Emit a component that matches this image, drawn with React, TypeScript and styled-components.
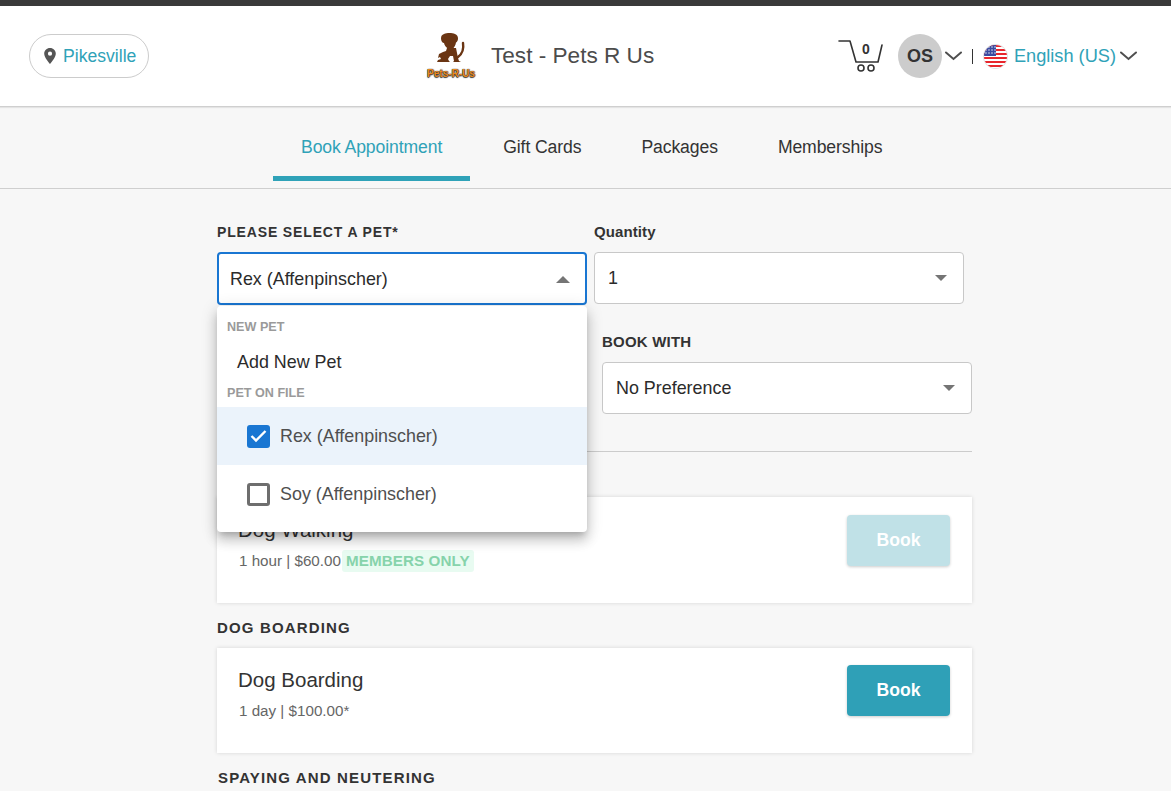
import { createGlobalStyle, styled } from 'styled-components';

const teal = '#2fa2b8';
const ink = '#333333';

const GlobalStyle = createGlobalStyle`
  html, body {
    margin: 0;
    height: 100%;
    overflow: hidden;
    background: #f7f7f7;
    font-family: "Liberation Sans", Arial, sans-serif;
    color: ${ink};
  }
`;

const TopStrip = styled.div`
  height: 6px;
  background: #3a3a3a;
`;

const Header = styled.header`
  display: grid;
  grid-template-columns: 398px 1fr auto;
  align-items: center;
  height: 100px;
  padding: 0 34px 0 29px;
  background: #fff;
  border-bottom: 1px solid #cfcfcf;
  box-shadow: 0 1px 1px #e4e4e4;
`;

const LocationPill = styled.button`
  display: flex;
  align-items: center;
  gap: 7px;
  width: 120px;
  height: 44px;
  padding: 0 0 0 14px;
  background: #fff;
  border: 1px solid #cccccc;
  border-radius: 22px;
  color: ${teal};
  font: 17.6px "Liberation Sans", Arial, sans-serif;
`;

const Brand = styled.div`
  display: flex;
  align-items: center;
  gap: 16px;
`;

const Logo = styled.div`
  display: flex;
  flex-direction: column;
  align-items: center;
  width: 48px;
  height: 47px;
`;

const LogoWord = styled.span`
  margin-top: 5px;
  color: #ea8a1e;
  font-size: 10px;
  font-weight: 700;
  line-height: 12px;
  white-space: nowrap;
  text-shadow: 0 0 1px #222, 0 1px 1px #333, 1px 0 1px #555;
`;

const BrandName = styled.span`
  font-size: 22.6px;
  color: #4c4c4c;
`;

const UserArea = styled.div`
  display: flex;
  align-items: center;
`;

const CartButton = styled.div`
  position: relative;
  width: 46px;
  height: 36px;
  margin-right: 14px;
`;

const CartCount = styled.span`
  position: absolute;
  top: 3px;
  left: 24px;
  font-size: 14px;
  font-weight: 700;
  color: ${ink};
`;

const Avatar = styled.div`
  display: flex;
  align-items: center;
  justify-content: center;
  width: 44px;
  height: 44px;
  margin-right: 3px;
  border-radius: 50%;
  background: #cccccc;
  font-size: 18px;
  font-weight: 700;
  color: ${ink};
`;

const Divider = styled.span`
  width: 1px;
  height: 15px;
  margin: 0 10px;
  background: #333;
`;

const Language = styled.span`
  margin: 0 4px 0 6px;
  font-size: 18.2px;
  color: ${teal};
`;

const Chevron = styled.svg`
  display: block;
  width: 17px;
  height: 10px;
  flex: none;
`;

const TabBar = styled.nav`
  display: flex;
  height: 81px;
  padding-left: 273px;
  border-bottom: 1px solid #cfcfcf;
`;

const Tab = styled.a<{ $active?: boolean }>`
  box-sizing: border-box;
  display: flex;
  align-items: center;
  height: 74px;
  padding: ${p => (p.$active ? '12px 28px 0' : '12px 30px 0')};
  margin-right: ${p => (p.$active ? '3px' : '0')};
  border-bottom: 5px solid ${p => (p.$active ? teal : 'transparent')};
  font-size: 17.6px;
  letter-spacing: -0.1px;
  color: ${p => (p.$active ? teal : ink)};
`;

const Content = styled.main`
  width: 755px;
  margin-left: 217px;
  padding-top: 34px;
`;

const TopRow = styled.div`
  display: grid;
  grid-template-columns: 370px 370px;
  column-gap: 7px;
`;

const SecondRow = styled.div`
  display: flex;
  justify-content: flex-end;
  margin-top: 28px;
`;

const Field = styled.div`
  position: relative;
  width: 370px;
`;

const FieldLabel = styled.label<{ $spacing?: string; $size?: string }>`
  display: block;
  height: 17px;
  margin-bottom: 12px;
  font-size: ${p => p.$size ?? '14px'};
  font-weight: 700;
  line-height: 18px;
  letter-spacing: ${p => p.$spacing ?? '0'};
  color: ${ink};
  white-space: nowrap;
`;

const SelectBox = styled.div<{ $open?: boolean }>`
  box-sizing: border-box;
  display: flex;
  align-items: center;
  justify-content: space-between;
  height: ${p => (p.$open ? '53px' : '52px')};
  padding: ${p => (p.$open ? '2px 15px 0 11px' : '0 16px 0 13px')};
  background: #fff;
  border: ${p => (p.$open ? '2px solid #1976d2' : '1px solid #c8c8c8')};
  border-radius: 4px;
  font-size: 17.9px;
  color: #2b2b2b;
`;

const Caret = styled.span<{ $up?: boolean }>`
  width: 0;
  height: 0;
  border-left: ${p => (p.$up ? '7px' : '6px')} solid transparent;
  border-right: ${p => (p.$up ? '7px' : '6px')} solid transparent;
  border-top: ${p => (p.$up ? '0' : '6px solid #757575')};
  border-bottom: ${p => (p.$up ? '7px solid #757575' : '0')};
`;

const Menu = styled.div`
  position: absolute;
  z-index: 5;
  top: 83px;
  left: 0;
  width: 370px;
  height: 226px;
  padding-top: 12px;
  box-sizing: border-box;
  background: #fff;
  border-radius: 4px;
  box-shadow: 0 5px 6px -3px rgba(0, 0, 0, 0.2), 0 9px 12px 1px rgba(0, 0, 0, 0.14),
    0 3px 16px 2px rgba(0, 0, 0, 0.12);
`;

const MenuGroup = styled.div`
  height: 18px;
  padding-left: 10px;
  font-size: 12.6px;
  font-weight: 700;
  line-height: 18px;
  color: #9a9a9a;
`;

const MenuAction = styled.div`
  height: 48px;
  padding-left: 20px;
  font-size: 17.9px;
  line-height: 52px;
  color: #2b2b2b;
`;

const MenuOptions = styled.div`
  margin-top: 5px;
`;

const MenuOption = styled.div<{ $selected?: boolean }>`
  display: flex;
  align-items: center;
  gap: 10px;
  height: 58px;
  padding-left: 30px;
  background: ${p => (p.$selected ? '#ebf3fb' : 'transparent')};
  font-size: 17.9px;
  color: #4f4f4f;
`;

const Check = styled.span<{ $checked?: boolean }>`
  box-sizing: border-box;
  display: flex;
  align-items: center;
  justify-content: center;
  width: 23px;
  height: 23px;
  border-radius: 3px;
  background: ${p => (p.$checked ? '#1976d2' : '#fff')};
  border: ${p => (p.$checked ? '0' : '3px solid #6e6e6e')};
`;

const Rule = styled.hr`
  height: 1px;
  margin: 37px 0 0;
  border: 0;
  background: #cccccc;
`;

const SectionTitle = styled.h3`
  height: 17px;
  margin: 0;
  padding-top: 16px;
  padding-bottom: 12px;
  font-size: 15px;
  font-weight: 700;
  line-height: 17px;
  letter-spacing: 1.15px;
  color: ${ink};
`;

const Section = styled.section<{ $nudge?: boolean }>`
  padding-left: ${p => (p.$nudge ? '1px' : '0')};
`;

const Card = styled.article`
  box-sizing: border-box;
  display: flex;
  justify-content: space-between;
  height: 105.5px;
  padding: 17.5px 22px 0 21px;
  background: #fff;
  box-shadow: 0 0 4px rgba(0, 0, 0, 0.14);
`;

const ServiceName = styled.div`
  font-size: 20.5px;
  line-height: 30px;
  color: #333;
`;

const ServiceMeta = styled.div`
  display: flex;
  align-items: center;
  margin: 5px 0 0 1px;
  font-size: 15.2px;
  line-height: 22px;
  color: #666;
`;

const MembersTag = styled.span`
  margin-left: 1px;
  padding: 0 4px;
  border-radius: 3px;
  background: #e8fbf1;
  font-weight: 700;
  letter-spacing: 0.1px;
  color: #86d3ab;
`;

const BookButton = styled.button<{ $disabled?: boolean }>`
  width: 103px;
  height: 51px;
  border: 0;
  border-radius: 4px;
  background: ${p => (p.$disabled ? '#c0e1e7' : '#2fa0b7')};
  box-shadow: 0 1px 3px rgba(0, 0, 0, 0.2);
  font: 700 17.6px "Liberation Sans", Arial, sans-serif;
  color: #fff;
`;

const Down = () => (
  <Chevron viewBox="0 0 17 10" fill="none" stroke="#4f4f4f" strokeWidth="2" strokeLinecap="round">
    <path d="M1 1.5 8.5 8 16 1.5" />
  </Chevron>
);

const PinIcon = () => (
  <svg width="12" height="16" viewBox="0 0 12 16">
    <path
      fill="#555"
      fillRule="evenodd"
      d="M6 0C2.7 0 .2 2.5.2 5.7.2 9.6 6 16 6 16s5.8-6.4 5.8-10.3C11.8 2.5 9.3 0 6 0Zm0 7.8a2.1 2.1 0 1 1 0-4.2 2.1 2.1 0 0 1 0 4.2Z"
    />
  </svg>
);

const CartIcon = () => (
  <svg width="46" height="36" viewBox="0 0 46 36" fill="none" stroke="#333" strokeWidth="1.6">
    <path d="M1 3h11l6 21h22L44 7" strokeLinecap="round" strokeLinejoin="round" />
    <circle cx="23" cy="30" r="3" />
    <circle cx="33" cy="30" r="3" />
  </svg>
);

const FlagIcon = () => (
  <svg width="25" height="25" viewBox="0 0 25 25">
    <defs>
      <clipPath id="flag-round">
        <circle cx="12.5" cy="12.5" r="11.5" />
      </clipPath>
    </defs>
    <circle cx="12.5" cy="12.5" r="12.5" fill="#e3e3e3" />
    <g clipPath="url(#flag-round)">
      <rect width="25" height="25" fill="#fff" />
      {[1, 5, 9, 13, 17, 21].map(y => (
        <rect key={y} y={y} width="25" height="2" fill="#e8262c" />
      ))}
      <rect width="13" height="12" fill="#3a4aa0" />
      {[3, 6, 9].map(y =>
        [3, 6, 9, 12].map(x => <circle key={`${x}-${y}`} cx={x} cy={y} r="0.7" fill="#fff" />),
      )}
    </g>
  </svg>
);

const DogLogo = () => (
  <svg width="30" height="30" viewBox="0 0 30 30">
    <g fill="#6a3513">
      <path d="M8 1c3-1.300 8-1.300 11 0 2 .7 3 2.500 3 4.500 0 2-1 3.500-2 4-.5 3-2 5.500-4 7l-4-1c-2-1-3.500-3-4-5.500-1.500 0-3-2-3-4.500S6 1.800 8 1Z" />
      <path d="M11 15h9l1 5 1 5 1 3 2 1h-8l1-1-1-5h-3l-2 3 1 2 1 1H1l1-2 3-1-1-2-2 1 1-4 4-2 3-1Z" />
    </g>
    <path d="M22 24c4-3 6-8 5-14" fill="none" stroke="#6a3513" strokeWidth="2.4" strokeLinecap="round" />
  </svg>
);

const Tick = () => (
  <svg width="17" height="14" viewBox="0 0 17 14" fill="none" stroke="#fff" strokeWidth="2.4">
    <path d="M1.500 7 6 11.500 15.500 2" />
  </svg>
);

export default function App() {
  return (
    <>
      <GlobalStyle />
      <TopStrip />
      <Header>
        <LocationPill>
          <PinIcon />
          Pikesville
        </LocationPill>
        <Brand>
          <Logo>
            <DogLogo />
            <LogoWord>Pets-R-Us</LogoWord>
          </Logo>
          <BrandName>Test - Pets R Us</BrandName>
        </Brand>
        <UserArea>
          <CartButton>
            <CartIcon />
            <CartCount>0</CartCount>
          </CartButton>
          <Avatar>OS</Avatar>
          <Down />
          <Divider />
          <FlagIcon />
          <Language>English (US)</Language>
          <Down />
        </UserArea>
      </Header>
      <TabBar>
        <Tab $active>Book Appointment</Tab>
        <Tab>Gift Cards</Tab>
        <Tab>Packages</Tab>
        <Tab>Memberships</Tab>
      </TabBar>
      <Content>
        <TopRow>
          <Field>
            <FieldLabel $spacing="0.85px">PLEASE SELECT A PET*</FieldLabel>
            <SelectBox $open>
              Rex (Affenpinscher)
              <Caret $up />
            </SelectBox>
            <Menu>
              <MenuGroup>NEW PET</MenuGroup>
              <MenuAction>Add New Pet</MenuAction>
              <MenuGroup>PET ON FILE</MenuGroup>
              <MenuOptions>
                <MenuOption $selected>
                  <Check $checked>
                    <Tick />
                  </Check>
                  Rex (Affenpinscher)
                </MenuOption>
                <MenuOption>
                  <Check />
                  Soy (Affenpinscher)
                </MenuOption>
              </MenuOptions>
            </Menu>
          </Field>
          <Field>
            <FieldLabel $size="15px" $spacing="0.1px">Quantity</FieldLabel>
            <SelectBox>
              1
              <Caret />
            </SelectBox>
          </Field>
        </TopRow>
        <SecondRow>
          <Field>
            <FieldLabel $size="15px" $spacing="0.2px">BOOK WITH</FieldLabel>
            <SelectBox>
              No Preference
              <Caret />
            </SelectBox>
          </Field>
        </SecondRow>
        <Rule />
        <Section>
          <SectionTitle />
          <Card>
            <div>
              <ServiceName>Dog Walking</ServiceName>
              <ServiceMeta>
                1 hour | $60.00
                <MembersTag>MEMBERS ONLY</MembersTag>
              </ServiceMeta>
            </div>
            <BookButton $disabled>Book</BookButton>
          </Card>
        </Section>
        <Section>
          <SectionTitle>DOG BOARDING</SectionTitle>
          <Card>
            <div>
              <ServiceName>Dog Boarding</ServiceName>
              <ServiceMeta>1 day | $100.00*</ServiceMeta>
            </div>
            <BookButton>Book</BookButton>
          </Card>
        </Section>
        <Section $nudge>
          <SectionTitle>SPAYING AND NEUTERING</SectionTitle>
        </Section>
      </Content>
    </>
  );
}
